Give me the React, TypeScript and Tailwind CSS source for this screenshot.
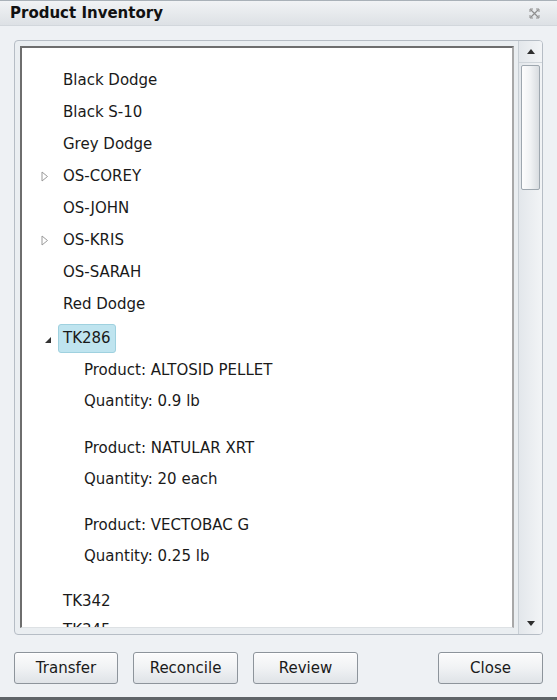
import React from 'react';

type Node = { label: string; arrow?: 'closed' | 'open'; selected?: boolean };

const topItems: Node[] = [
  { label: 'Black Dodge' },
  { label: 'Black S-10' },
  { label: 'Grey Dodge' },
  { label: 'OS-COREY', arrow: 'closed' },
  { label: 'OS-JOHN' },
  { label: 'OS-KRIS', arrow: 'closed' },
  { label: 'OS-SARAH' },
  { label: 'Red Dodge' },
];

const products = [
  { product: 'ALTOSID PELLET', qty: '0.9 lb' },
  { product: 'NATULAR XRT', qty: '20 each' },
  { product: 'VECTOBAC G', qty: '0.25 lb' },
];

const Arrow: React.FC<{ kind?: 'closed' | 'open' }> = ({ kind }) => (
  <span className="w-[22px] h-full flex items-center">
    {kind === 'closed' && (
      <svg width="8" height="11" viewBox="0 0 8 11">
        <path d="M1 1 L6.5 5.5 L1 10 Z" fill="none" stroke="#9a9a9a" strokeWidth="1" />
      </svg>
    )}
    {kind === 'open' && (
      <svg width="8" height="8" viewBox="0 0 8 8" className="ml-[3px] mt-[2px]">
        <path d="M7 1 L7 7 L1 7 Z" fill="#333" />
      </svg>
    )}
  </span>
);

const Row: React.FC<{ node: Node; h?: string }> = ({ node, h = 'h-[32px]' }) => (
  <div className={`${h} flex items-center pl-[19px]`}>
    <Arrow kind={node.arrow} />
    {node.selected ? (
      <span className="-ml-[5px] h-[29px] px-[4px] flex items-center rounded-[3px] border border-[#9fd1df] bg-[#bfe4ef]">
        {node.label}
      </span>
    ) : (
      <span>{node.label}</span>
    )}
  </div>
);

const Button: React.FC<{ label: string; w: string }> = ({ label, w }) => (
  <button
    className={`${w} h-[32px] rounded-[3px] border border-[#8d949b] bg-gradient-to-b from-[#fcfcfc] via-[#f0f2f4] to-[#dfe3e7] text-[15px] text-[#1a1a1a] shadow-[inset_0_1px_0_#ffffff]`}
  >
    {label}
  </button>
);

export default function App() {
  return (
    <div
      className="w-[557px] h-[700px] flex flex-col bg-[#eef1f4] border-t border-[#a9b1b8] border-b-[3px] border-b-[#5f6468] text-[15px] text-[#1a1a1a]"
      style={{ fontFamily: '"DejaVu Sans", Verdana, sans-serif' }}
    >
      {/* Title bar */}
      <div className="h-[25px] flex items-center justify-between pl-[10px] pr-[17px] bg-gradient-to-b from-[#f1f3f5] to-[#dde1e5] border-b border-[#d2d7dc]">
        <span className="font-bold text-[15px] text-[#111]">Product Inventory</span>
        <svg width="11" height="11" viewBox="0 0 11 11">
          <path d="M1.5 1.5 L9.5 9.5 M9.5 1.5 L1.5 9.5" stroke="#8f8f8f" strokeWidth="1.2" />
          <path d="M1 1 h3 M1 1 v3 M10 1 h-3 M10 1 v3 M1 10 h3 M1 10 v-3 M10 10 h-3 M10 10 v-3" stroke="#8f8f8f" strokeWidth="1" />
        </svg>
      </div>

      {/* List box */}
      <div className="mx-[14px] mt-[14px] h-[595px] flex rounded-[4px] border border-[#b6bdc5] bg-[#eaeef1]">
        <div className="flex-1 pl-[5px] pr-[4px] pt-[5px] pb-[6px] flex">
          <div className="flex-1 bg-white border-l-2 border-t-2 border-[#6e6e6e] border-r-2 border-r-[#a8a8a8] border-b border-b-[#dde1e4] overflow-hidden">
            <div className="pt-[16px]">
              {topItems.map((n) => (
                <Row key={n.label} node={n} />
              ))}
              <div className="h-[2px]" />
              <Row node={{ label: 'TK286', arrow: 'open', selected: true }} h="h-[33px]" />
              {products.map((p, i) => (
                <div
                  key={p.product}
                  className={`${i === 0 ? 'pb-[16px]' : i === 1 ? 'pb-[15px]' : 'pb-[14px]'} pl-[62px]`}
                >
                  <div className="h-[31px] flex items-center">Product: {p.product}</div>
                  <div className="h-[31px] flex items-center">Quantity: {p.qty}</div>
                </div>
              ))}
              <Row node={{ label: 'TK342' }} h="h-[30px]" />
              <Row node={{ label: 'TK345' }} h="h-[29px]" />
            </div>
          </div>
        </div>

        {/* Scrollbar */}
        <div className="w-[24px] flex flex-col border-l border-[#c8cfd5] bg-gradient-to-r from-[#e3e7eb] to-[#f2f4f6] rounded-r-[3px]">
          <div className="h-[22px] flex items-center justify-center border-b border-[#cfd5da]">
            <svg width="8" height="5" viewBox="0 0 8 5">
              <path d="M0 5 L4 0 L8 5 Z" fill="#2e2e2e" />
            </svg>
          </div>
          <div className="mx-[2px] mt-[2px] h-[125px] rounded-[2px] border border-[#9ea7af] bg-gradient-to-r from-[#fdfdfd] via-[#f0f2f4] to-[#d8dce0]" />
          <div className="flex-1" />
          <div className="h-[22px] flex items-center justify-center">
            <svg width="8" height="5" viewBox="0 0 8 5">
              <path d="M0 0 L8 0 L4 5 Z" fill="#2e2e2e" />
            </svg>
          </div>
        </div>
      </div>

      {/* Buttons */}
      <div className="mt-[17px] px-[14px] flex">
        <Button label="Transfer" w="w-[104px]" />
        <div className="w-[15px]" />
        <Button label="Reconcile" w="w-[105px]" />
        <div className="w-[15px]" />
        <Button label="Review" w="w-[105px]" />
        <div className="flex-1" />
        <Button label="Close" w="w-[105px]" />
      </div>
    </div>
  );
}
